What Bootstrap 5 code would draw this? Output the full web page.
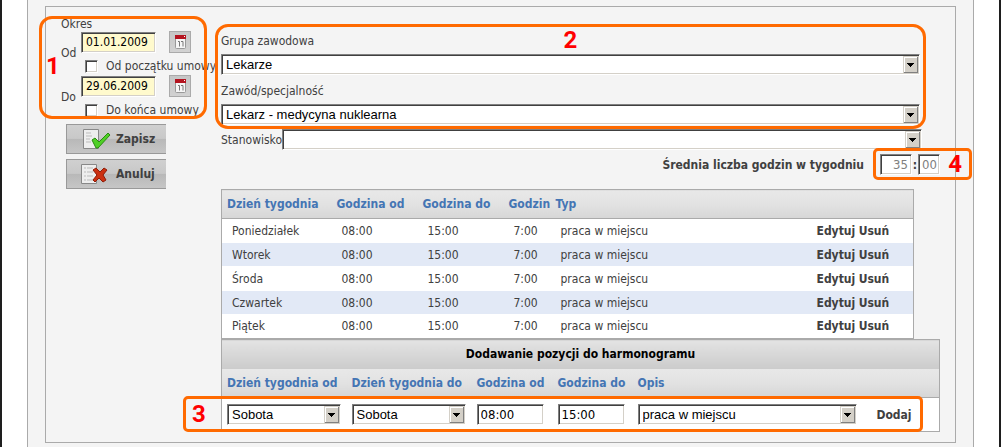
<!DOCTYPE html>
<html lang="pl">
<head>
<meta charset="utf-8">
<meta name="viewport" content="width=device-width, initial-scale=1">
<title>Harmonogram pracy</title>
<link href="https://cdn.jsdelivr.net/npm/bootstrap@5.3.0/dist/css/bootstrap.min.css" rel="stylesheet">
<style>
  body { font: 12px/16px Tahoma, "DejaVu Sans Condensed", "DejaVu Sans", sans-serif; color: #404040; background: #fff; border: solid #1e1e1e; border-width: 0 2px; }
  .shell { padding: 0 25px; }
  .panel { background: #f4f4f4; border: solid #aaa; border-width: 0 1px; padding: 6px 17px 4px; }
  .frame { border: 1px solid #aaa; padding: 10px 15px; }
  .side { width: 160px; }
  .period-title { height: 14px; line-height: 14px; }
  .period-row { height: 22px; }
  .period-opt { padding-top: 4px; }
  .period-key { width: 20px; }
  .main { padding-top: 12px; min-width: 0; }
  .fields { margin-right: 20px; }
  .fields-wide { margin-right: 18px; }
  .field-label { line-height: 25px; display: block; }
  .gap-row { margin-top: 4px; }

  .inp, .sel { appearance: none; height: 21px; border: 1px solid; border-color: #808080 #fff #fff #808080; border-radius: 0; box-shadow: inset 1px 1px #404040, inset -1px -1px #d4d0c8; background-color: #fff; color: #000; padding: 0 3px; line-height: 17px; }
  .inp { font-size: 13px; }
  .inp-date { width: 75px; background-color: #fffacd; padding-left: 4px; font-size: 12px; }
  .inp-time { width: 67px; }
  .inp-off { color: #808080; opacity: 1; text-align: right; }
  .inp-h { width: 32px; }
  .inp-m { width: 22px; padding: 0 2px; }
  .colon { width: 6px; text-align: center; }
  .sel { font-family: "Liberation Sans", Arial, sans-serif; font-size: 13px; padding: 0 18px 0 4px; background-repeat: no-repeat; background-position: right 0 top 1px; background-image: url("data:image/svg+xml,%3Csvg xmlns='http://www.w3.org/2000/svg' width='16' height='18' shape-rendering='crispEdges'%3E%3Cpath fill='%23404040' d='M0 0h16v18H0z'/%3E%3Cpath fill='%23d4d0c8' d='M0 0h15v17H0z'/%3E%3Cpath fill='%23808080' d='M1 1h14v16H1z'/%3E%3Cpath fill='%23fff' d='M1 1h13v15H1z'/%3E%3Cpath fill='%23d4d0c8' d='M2 2h12v14H2z'/%3E%3Cpath fill='%23000' d='M4 7h7v1H4zM5 8h5v1H5zM6 9h3v1H6zM7 10h1v1H7z'/%3E%3C/svg%3E"); }
  .sel-day { width: 114px; }
  .chk { appearance: none; width: 13px; height: 13px; margin: 0 8px 0 4px; flex: none; border: 1px solid; border-color: #808080 #fff #fff #808080; box-shadow: inset 1px 1px #404040, inset -1px -1px #d4d0c8; background: #fff; }
  .chk:checked { background: #404040; }
  .cal { width: 22px; height: 22px; margin-left: 13px; padding: 0; border: 1px solid #aaa; background: linear-gradient(#c6c6c6, #d2d2d2); }
  .cal svg, .act svg { display: block; }
  .act { width: 100px; height: 30px; margin: 5px 0 0 5px; padding: 0 0 0 14px; border: solid #999; border-width: 1px 0 1px 1px; background: linear-gradient(#d0d0d0, #c8c8c8 48%, #b8b8b8 50%, #c6c6c6); color: #404040; font-weight: bold; }
  .act span { margin-left: 5px; }

  .grid { table-layout: fixed; border: 1px solid #aaa; background: #fff; }
  .grid th { color: #4475b4; padding: 0 0 0 5px; background: linear-gradient(#e8e8e8, #e2e2e2 50%, #d6d6d6); border-bottom: 1px solid #aaa; white-space: nowrap; }
  .days { width: calc(100% - 26px); margin-top: 14px; }
  .days th { height: 29px; }
  .days td { height: 24px; padding: 0 0 0 10px; white-space: nowrap; }
  .days tbody tr:nth-child(even) td { background: #e2e9f6; box-shadow: inset 0 -1px #fff; }
  .lnk { color: #404040; font-weight: bold; text-decoration: none; }
  .adder .top-head { height: 29px; padding: 0; color: #000; text-align: center; border: 0; background: linear-gradient(#e3e3e3, #cbcbcb); }
  .adder th { height: 29px; }
  .adder td { height: 34px; padding: 0 0 0 5px; }
  .adder .desc-cell { padding-right: 14px; }

  .mark-box { position: absolute; border: 3px solid #ff6a00; border-radius: 13px; pointer-events: none; color: #f00; font: bold 24px/24px Roboto, Arial, sans-serif; z-index: 2; display: flex; align-items: center; }
  .mk-period { inset: -1px 14px 0 -22px; padding: 0 0 4px 4px; }
  .mk-job { inset: -5px -6px -4px -6px; justify-content: center; align-items: flex-start; padding-top: 1px; }
  .mk-add { inset: auto 17px 0 -38px; height: 36px; border-radius: 5px; padding-left: 6px; }
  .mk-avg { inset: -6px -32px -5px -7px; border-radius: 5px; justify-content: flex-end; padding-right: 7px; }
</style>
</head>
<body>
<div class="shell">
<main class="panel min-vh-100">
<form class="frame d-flex" onsubmit="return false">
  <div class="side flex-shrink-0">
    <div class="position-relative">
      <div class="period-title">Okres</div>
      <div class="d-flex align-items-center">
        <label class="period-key" for="from">Od</label>
        <div>
          <div class="period-row d-flex align-items-center">
            <input class="inp inp-date" id="from" type="text" value="01.01.2009">
            <button class="cal" type="button" aria-label="Kalendarz od"><svg width="20" height="20"><rect x="5.500" y="4.500" width="10" height="12" rx="1" fill="#f6f6f6" stroke="#999"/><path d="M5 3h11v4H5z" fill="#b41420"/><path d="M14 4h1v1h-1z" fill="#fff"/><path d="M8 9.500h1.500v5M11 9.500h2v5" fill="none" stroke="#777"/></svg></button>
          </div>
          <div class="period-row period-opt d-flex align-items-center text-nowrap">
            <input class="chk" id="start" type="checkbox"><label for="start">Od początku umowy</label>
          </div>
        </div>
      </div>
      <div class="d-flex align-items-center">
        <label class="period-key" for="to">Do</label>
        <div>
          <div class="period-row d-flex align-items-center">
            <input class="inp inp-date" id="to" type="text" value="29.06.2009">
            <button class="cal" type="button" aria-label="Kalendarz do"><svg width="20" height="20"><rect x="5.500" y="4.500" width="10" height="12" rx="1" fill="#f6f6f6" stroke="#999"/><path d="M5 3h11v4H5z" fill="#b41420"/><path d="M14 4h1v1h-1z" fill="#fff"/><path d="M8 9.500h1.500v5M11 9.500h2v5" fill="none" stroke="#777"/></svg></button>
          </div>
          <div class="period-row period-opt d-flex align-items-center text-nowrap">
            <input class="chk" id="end" type="checkbox"><label for="end">Do końca umowy</label>
          </div>
        </div>
      </div>
      <div class="mark-box mk-period">1</div>
    </div>
    <button class="act d-flex align-items-center" type="submit">
      <svg width="30" height="24"><path d="M2.500 2.500h15v19h-15z" fill="#eee" stroke="#888"/><path d="M5 6h5M5 9h6M5 12h4M5 15h5" stroke="#bbb"/><path d="M11 13l3-2 4 4L27 6l2 2-12 13h-2z" fill="#4fd026" stroke="#2b8a12" stroke-linejoin="round"/></svg>
      <span>Zapisz</span></button>
    <button class="act d-flex align-items-center" type="button">
      <svg width="30" height="24"><path d="M.5 2.500h15v19H.5z" fill="#eee" stroke="#888"/><path d="M3 6h9M3 10h9M3 14h9M3 18h9" stroke="#bbb" stroke-dasharray="2 1 8"/><path d="M12 8l3-2 4 4 4-4 3 2-4 5 3 5-3 2-4-4-4 4-2-2 4-5z" fill="#cc3010" stroke="#8e1c08" stroke-linejoin="round"/></svg>
      <span>Anuluj</span></button>
  </div>

  <div class="main flex-grow-1">
    <div class="fields position-relative">
      <label class="field-label" for="group">Grupa zawodowa</label>
      <select class="sel w-100 d-block" id="group"><option>Lekarze</option></select>
      <label class="field-label gap-row" for="job">Zawód/specjalność</label>
      <select class="sel w-100 d-block" id="job"><option>Lekarz - medycyna nuklearna</option></select>
      <div class="mark-box mk-job">2</div>
    </div>
    <div class="fields-wide gap-row d-flex align-items-center">
      <label for="post">Stanowisko</label>
      <select class="sel flex-grow-1" id="post"><option></option></select>
    </div>
    <div class="gap-row d-flex justify-content-end align-items-center">
      <label class="lnk me-3" for="avgh">Średnia liczba godzin w tygodniu</label>
      <div class="position-relative d-flex align-items-center">
        <input class="inp inp-off inp-h" id="avgh" type="text" value="35" disabled><b class="colon">:</b><input class="inp inp-off inp-m" type="text" aria-label="Minuty" value="00" disabled>
        <div class="mark-box mk-avg">4</div>
      </div>
    </div>

    <table class="grid days">
      <colgroup><col style="width:110px"><col style="width:86px"><col style="width:86px"><col style="width:47px"><col><col style="width:107px"></colgroup>
      <thead><tr><th>Dzień tygodnia</th><th>Godzina od</th><th>Godzina do</th><th>Godzin</th><th>Typ</th><th></th></tr></thead>
      <tbody>
        <tr><td>Poniedziałek</td><td>08:00</td><td>15:00</td><td>7:00</td><td>praca w miejscu</td><td><a class="lnk" href="#">Edytuj</a> <a class="lnk" href="#">Usuń</a></td></tr>
        <tr><td>Wtorek</td><td>08:00</td><td>15:00</td><td>7:00</td><td>praca w miejscu</td><td><a class="lnk" href="#">Edytuj</a> <a class="lnk" href="#">Usuń</a></td></tr>
        <tr><td>Środa</td><td>08:00</td><td>15:00</td><td>7:00</td><td>praca w miejscu</td><td><a class="lnk" href="#">Edytuj</a> <a class="lnk" href="#">Usuń</a></td></tr>
        <tr><td>Czwartek</td><td>08:00</td><td>15:00</td><td>7:00</td><td>praca w miejscu</td><td><a class="lnk" href="#">Edytuj</a> <a class="lnk" href="#">Usuń</a></td></tr>
        <tr><td>Piątek</td><td>08:00</td><td>15:00</td><td>7:00</td><td>praca w miejscu</td><td><a class="lnk" href="#">Edytuj</a> <a class="lnk" href="#">Usuń</a></td></tr>
      </tbody>
    </table>
    <div class="position-relative">
      <table class="grid adder w-100">
        <colgroup><col style="width:125px"><col style="width:125px"><col style="width:81px"><col style="width:80px"><col><col style="width:68px"></colgroup>
        <thead>
          <tr><th class="top-head" colspan="6">Dodawanie pozycji do harmonogramu</th></tr>
          <tr><th>Dzień tygodnia od</th><th>Dzień tygodnia do</th><th>Godzina od</th><th>Godzina do</th><th>Opis</th><th></th></tr>
        </thead>
        <tbody><tr>
          <td><select class="sel sel-day d-block" aria-label="Dzień tygodnia od"><option>Sobota</option></select></td>
          <td><select class="sel sel-day d-block" aria-label="Dzień tygodnia do"><option>Sobota</option></select></td>
          <td><input class="inp inp-time d-block" type="text" aria-label="Godzina od" value="08:00"></td>
          <td><input class="inp inp-time d-block" type="text" aria-label="Godzina do" value="15:00"></td>
          <td class="desc-cell"><select class="sel w-100 d-block" aria-label="Opis"><option>praca w miejscu</option></select></td>
          <td><a class="lnk" href="#">Dodaj</a></td>
        </tr></tbody>
      </table>
      <div class="mark-box mk-add">3</div>
    </div>
  </div>
</form>
</main>
</div>
<script src="https://cdn.jsdelivr.net/npm/bootstrap@5.3.0/dist/js/bootstrap.bundle.min.js"></script>
</body>
</html>
